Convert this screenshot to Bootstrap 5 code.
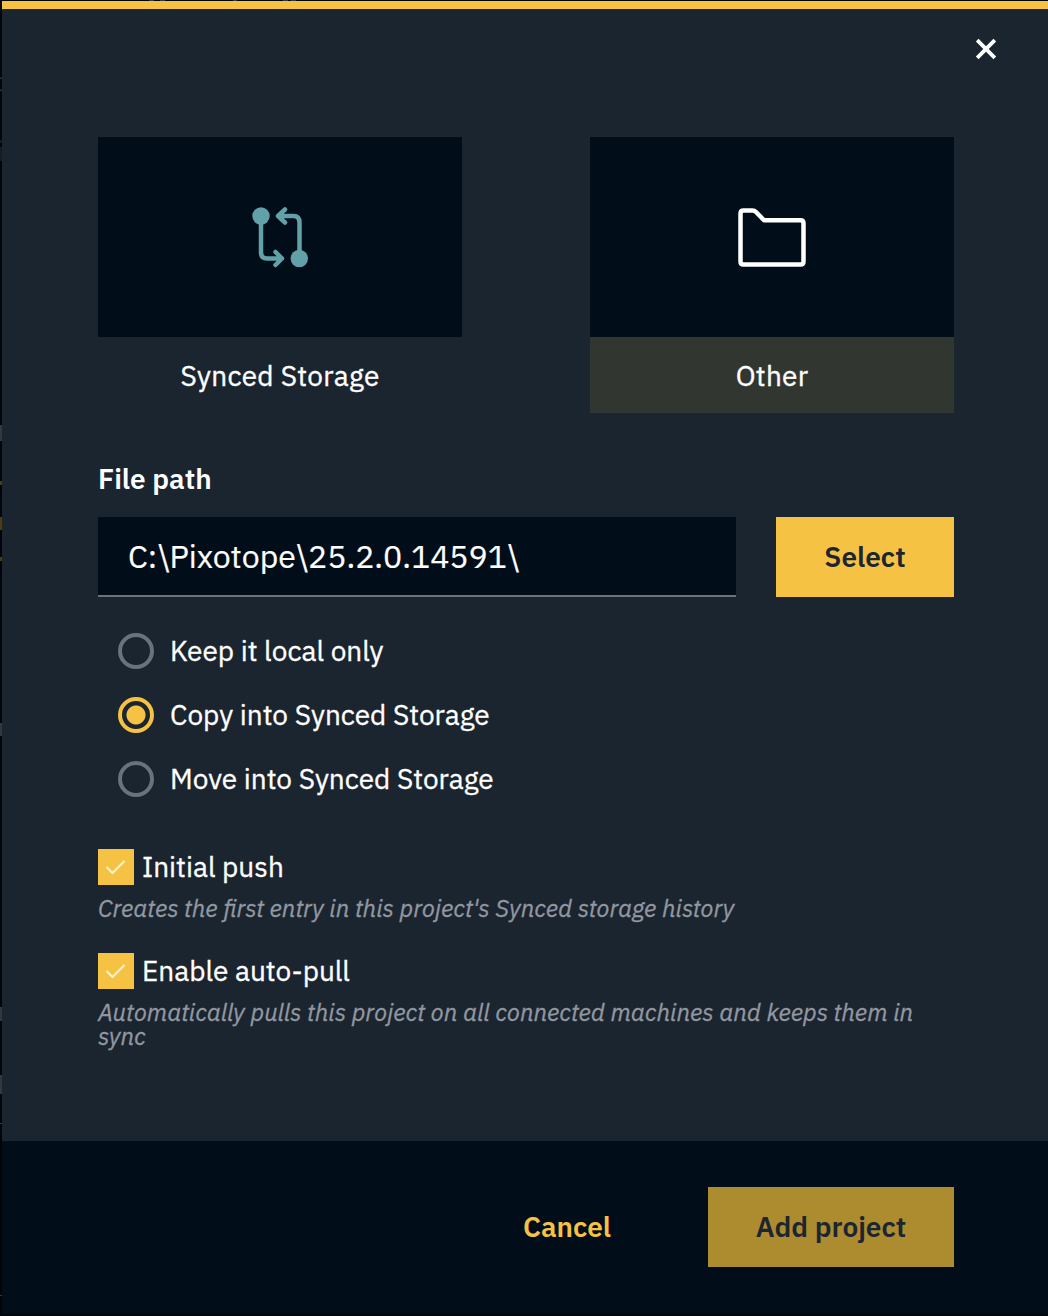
<!DOCTYPE html>
<html lang="en">
<head>
<meta charset="utf-8">
<meta name="viewport" content="width=device-width, initial-scale=1">
<title>Add project</title>
<link href="https://cdn.jsdelivr.net/npm/bootstrap@5.3.0/dist/css/bootstrap.min.css" rel="stylesheet">
<style>
  body { background: #000307; color: #fff; font-family: "IBM Plex Sans", Roboto, "Noto Sans", sans-serif; font-size: 28px; line-height: 36px; overflow: hidden; }
  .backdrop-marks { left: 0; top: 0; }
  .dialog-panel { margin: 1px 0 0 2px; height: 1313px; background: #1b2530; border-top: 8px solid #f6c244; }
  .dialog-head { height: 128px; padding: 28px 50px 0 0; }
  .close-x { width: 24px; height: 24px; padding: 0; border: 0; background: none; line-height: 0; }
  .dialog-main { padding: 0 94px 0 96px; }
  .tile { width: 364px; }
  .tile-art { height: 200px; background: #010d18; }
  .tile-label { height: 76px; padding-top: 1px; letter-spacing: .3px; -webkit-text-stroke: .35px currentColor; }
  .tile.is-active .tile-label { background: #313631; }
  .field-label { margin: 48px 0 20px; font-weight: 600; }
  .path-input { width: 638px; height: 80px; padding: 0 30px; border: 0; border-bottom: 2px solid #6a727b; border-radius: 0; background: #010d18 !important; color: #fff !important; font-size: 32px; -webkit-text-stroke: .2px currentColor; }
  .btn-flat { height: 80px; border: 0; border-radius: 0; font-size: 28px; font-weight: 600; padding: 0; color: #1c2530; background: #f6c244; }
  .btn-select { width: 178px; }
  .btn-add { width: 246px; background: #ad8b2f; }
  .btn-cancel { width: 184px; background: none; color: #f6c244; }
  .radio-group { padding: 36px 0 0 20px; gap: 28px; }
  .radio-row { height: 36px; gap: 16px; }
  .radio-row, .check-row, .hint { -webkit-text-stroke: .3px currentColor; }
  .form-check-input.ring { width: 36px; height: 36px; margin: 0; border: 4px solid #6a727b; background: none; }
  .form-check-input.ring:checked { border-color: #f6c244; background: radial-gradient(circle, #f6c244 9px, transparent 10px); }
  .check-group { padding-top: 52px; gap: 33px; }
  .check-row { height: 36px; gap: 8px; }
  .tick { width: 36px; height: 36px; background: #f6c244; }
  .hint { font-size: 24px; line-height: 24px; font-style: italic; color: #9297a0; margin: 11px 0 0; }
  .dialog-foot { height: 173px; padding: 46px 94px 0 0; background: #010d18; gap: 49px; }
</style>
</head>
<body>
<svg class="backdrop-marks position-absolute" width="330" height="1316" aria-hidden="true">
  <path fill="#33383c" d="M0 77.500h2v1.500H0zM0 89.500h2v1.500H0zM0 425h2v16H0zM0 723h2v13H0zM0 1007h2v14H0zM0 1075h2v19H0zM0 1123h2v1H0zM0 1295h2v1H0zM149 0h5v1h-5zM160 0h5v1h-5zM233 0h4v1h-4zM283 0h5v1h-5zM291 0h5v1h-5z"/>
  <path fill="#171c20" d="M0 140h2v3H0zM0 147h2v14H0z"/>
  <path fill="#4d3d0c" d="M0 481h2v4H0zM0 517h2v13H0zM0 557h2v4H0z"/>
</svg>
<div class="dialog-panel d-flex flex-column" role="dialog" aria-label="Add project">
  <header class="dialog-head d-flex justify-content-end">
    <button class="close-x" aria-label="Close">
      <svg width="24" height="24" viewBox="0 0 24 24" fill="none" stroke="#fff" stroke-width="3.800"><path d="M3.200 3.200 20.800 20.800M20.800 3.200 3.200 20.800"/></svg>
    </button>
  </header>
  <main class="dialog-main flex-grow-1">
    <div class="d-flex justify-content-between">
      <div class="tile">
        <div class="tile-art d-flex align-items-center justify-content-center">
          <svg width="60" height="64" viewBox="0 -.5 60 64" fill="none" stroke="#63a1a8" stroke-width="4.500" stroke-linecap="round" stroke-linejoin="round">
            <circle cx="11" cy="10.500" r="8.700" fill="#63a1a8" stroke="none"/>
            <circle cx="49.300" cy="53" r="8.700" fill="#63a1a8" stroke="none"/>
            <path d="M11 12V47Q11 53 17 53H32M25.500 46.500 32 53 25.500 59.500M49.500 51V17Q49.500 10.500 43.500 10.500H28M35 4 28 10.500 35 17"/>
          </svg>
        </div>
        <div class="tile-label d-flex align-items-center justify-content-center">Synced Storage</div>
      </div>
      <div class="tile is-active">
        <div class="tile-art d-flex align-items-center justify-content-center">
          <svg width="72" height="64" viewBox="0 -.5 72 64" fill="none" stroke="#fff" stroke-width="4.500" stroke-linejoin="round"><path d="M7.500 5H16.500Q18.500 5 20 6.500L28 14.700H64.500Q67.500 14.700 67.500 17.700V56Q67.500 59 64.500 59H7.500Q4.500 59 4.500 56V8Q4.500 5 7.500 5Z"/></svg>
        </div>
        <div class="tile-label d-flex align-items-center justify-content-center">Other</div>
      </div>
    </div>

    <label class="field-label d-block" for="path">File path</label>
    <div class="d-flex justify-content-between">
      <input id="path" class="form-control path-input" type="text" value="C:\Pixotope\25.2.0.14591\">
      <button class="btn btn-flat btn-select">Select</button>
    </div>

    <div class="radio-group d-flex flex-column">
      <label class="radio-row d-flex align-items-center"><input class="form-check-input ring" type="radio" name="mode"><span>Keep it local only</span></label>
      <label class="radio-row d-flex align-items-center"><input class="form-check-input ring" type="radio" name="mode" checked><span>Copy into Synced Storage</span></label>
      <label class="radio-row d-flex align-items-center"><input class="form-check-input ring" type="radio" name="mode"><span>Move into Synced Storage</span></label>
    </div>

    <div class="check-group d-flex flex-column">
      <div>
        <div class="check-row d-flex align-items-center" role="checkbox" aria-checked="true">
          <svg class="tick" viewBox="0 0 36 36" fill="none" stroke="#fff3cf" stroke-width="2"><path d="M8.500 18 14.500 24 26.500 12"/></svg><span>Initial push</span>
        </div>
        <p class="hint">Creates the first entry in this project's Synced storage history</p>
      </div>
      <div>
        <div class="check-row d-flex align-items-center" role="checkbox" aria-checked="true">
          <svg class="tick" viewBox="0 0 36 36" fill="none" stroke="#fff3cf" stroke-width="2"><path d="M8.500 18 14.500 24 26.500 12"/></svg><span>Enable auto-pull</span>
        </div>
        <p class="hint">Automatically pulls this project on all connected machines and keeps them in sync</p>
      </div>
    </div>
  </main>
  <footer class="dialog-foot d-flex justify-content-end">
    <button class="btn btn-flat btn-cancel">Cancel</button>
    <button class="btn btn-flat btn-add">Add project</button>
  </footer>
</div>
<script src="https://cdn.jsdelivr.net/npm/bootstrap@5.3.0/dist/js/bootstrap.bundle.min.js"></script>
</body>
</html>
